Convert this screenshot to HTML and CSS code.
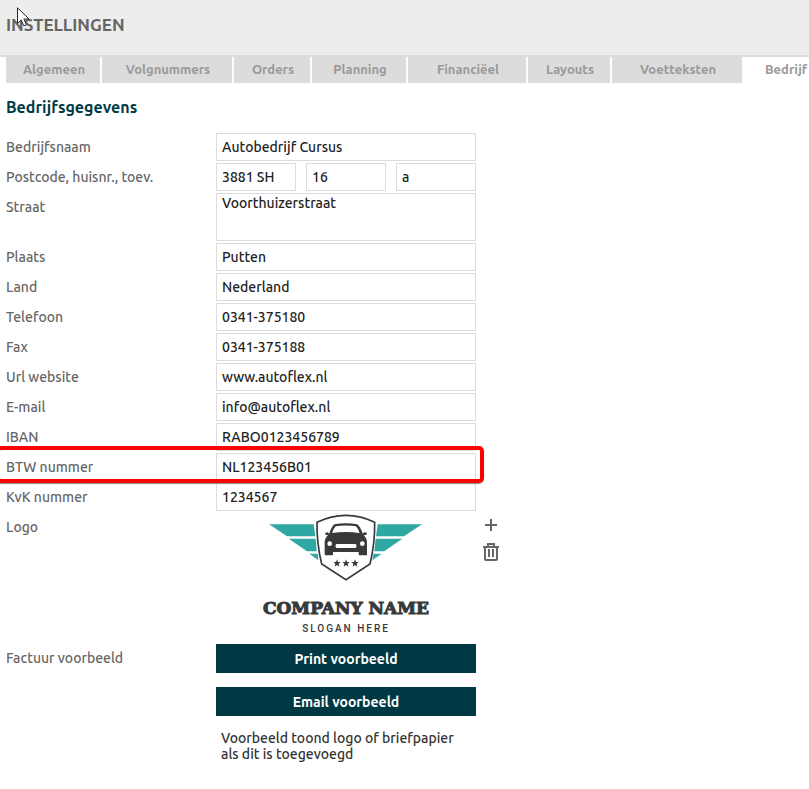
FILE: index.html
```html
<!DOCTYPE html>
<html lang="nl">
<head>
    <meta charset="UTF-8">
    <meta name="viewport" content="width=device-width, initial-scale=1.0">
    <title>Instellingen</title>
    <link rel="stylesheet" href="styles.css">
</head>
<body>
    <header class="page-header">
        <h1>INSTELLINGEN</h1>
        <svg class="cursor" width="13" height="20" viewBox="0 0 13 20">
            <path d="M0.5 0.8V16.5L4.2 13L6.8 18.8L9.4 17.7L6.9 12H12Z" fill="#fff" stroke="#222" stroke-width="1"/>
        </svg>
    </header>
    <nav class="tabs">
        <a href="#algemeen" class="tab">Algemeen</a>
        <a href="#volgnummers" class="tab">Volgnummers</a>
        <a href="#orders" class="tab">Orders</a>
        <a href="#planning" class="tab">Planning</a>
        <a href="#financieel" class="tab">Financiëel</a>
        <a href="#layouts" class="tab">Layouts</a>
        <a href="#voetteksten" class="tab">Voetteksten</a>
        <a href="#bedrijf" class="tab active">Bedrijf</a>
    </nav>
    <main>
        <h2>Bedrijfsgegevens</h2>
        <form class="company-form">
            <div class="row">
                <label for="naam">Bedrijfsnaam</label>
                <input type="text" id="naam" class="field" value="Autobedrijf Cursus">
            </div>
            <div class="row">
                <label for="postcode">Postcode, huisnr., toev.</label>
                <div class="address">
                    <input type="text" id="postcode" class="field" value="3881 SH">
                    <input type="text" class="field" aria-label="Huisnummer" value="16">
                    <input type="text" class="field" aria-label="Toevoeging" value="a">
                </div>
            </div>
            <div class="row">
                <label for="straat">Straat</label>
                <textarea id="straat" class="field">Voorthuizerstraat</textarea>
            </div>
            <div class="row">
                <label for="plaats">Plaats</label>
                <input type="text" id="plaats" class="field" value="Putten">
            </div>
            <div class="row">
                <label for="land">Land</label>
                <input type="text" id="land" class="field" value="Nederland">
            </div>
            <div class="row">
                <label for="telefoon">Telefoon</label>
                <input type="text" id="telefoon" class="field" value="0341-375180">
            </div>
            <div class="row">
                <label for="fax">Fax</label>
                <input type="text" id="fax" class="field" value="0341-375188">
            </div>
            <div class="row">
                <label for="website">Url website</label>
                <input type="text" id="website" class="field" value="www.autoflex.nl">
            </div>
            <div class="row">
                <label for="email">E-mail</label>
                <input type="text" id="email" class="field" value="info@autoflex.nl">
            </div>
            <div class="row">
                <label for="iban">IBAN</label>
                <input type="text" id="iban" class="field" value="RABO0123456789">
            </div>
            <div class="row marked">
                <label for="btw">BTW nummer</label>
                <input type="text" id="btw" class="field" value="NL123456B01">
            </div>
            <div class="row">
                <label for="kvk">KvK nummer</label>
                <input type="text" id="kvk" class="field" value="1234567">
            </div>
            <div class="row logo-row">
                <span class="label">Logo</span>
                <div class="logo">
                    <svg width="190" height="70" viewBox="2 24 570 210">
                        <!-- wings -->
                        <g fill="#2fa8a4">
                            <path d="M56 58H190L195 94H110Z"/>
                            <path d="M115 101H196L199 139H170Z"/>
                            <path d="M177 146H202L204 166Z"/>
                            <path d="M515 58H382L377 94H461Z"/>
                            <path d="M456 101H376L372 139H402Z"/>
                            <path d="M394 146H370L366 166Z"/>
                        </g>
                        <!-- shield -->
                        <path d="M200 52Q242 31 287 31Q332 31 373 52Q374 116 359 177L287 224L214 177Q199 116 200 52Z" fill="#fff" stroke="#37393b" stroke-width="5"/>
                        <!-- car -->
                        <path d="M252 58Q286 52 321 58Q331 67 337 86L341 82L349 83V89L340 91Q350 100 350 113V149Q350 151 347 151H328Q325 151 325 148V141H248V148Q248 151 245 151H226Q223 151 223 148V113Q223 100 233 91L225 89V83L232 82L237 86Q242 67 252 58Z" fill="#37393b"/>
                        <path d="M256 64Q286 59 317 64Q324 72 328 84Q286 78 245 84Q249 72 256 64Z" fill="#fff"/>
                        <rect x="256" y="117" width="62" height="12" rx="4" fill="#fff"/>
                        <circle cx="238" cy="116" r="7" fill="#fff"/>
                        <circle cx="336" cy="116" r="7" fill="#fff"/>
                        <!-- stars -->
                        <g fill="#37393b">
                            <path id="star" d="M287 163L290 171H298L292 176L294 185L287 180L280 185L282 176L276 171H284Z"/>
                            <use href="#star" x="-27"/>
                            <use href="#star" x="27"/>
                        </g>
                    </svg>
                    <strong>COMPANY NAME</strong>
                    <span class="slogan">SLOGAN HERE</span>
                </div>
                <div class="logo-actions">
                    <button type="button" aria-label="Logo toevoegen">
                        <svg width="16" height="16" viewBox="0 0 16 16">
                            <path d="M8 2V14M2 8H14" stroke="#666" stroke-width="2"/>
                        </svg>
                    </button>
                    <button type="button" aria-label="Logo verwijderen">
                        <svg width="16" height="20" viewBox="0 0 16 20" fill="none" stroke="#666" stroke-width="2">
                            <path d="M0 5H16M5 4V2H11V4M2 5V17Q2 18 3 18H13Q14 18 14 17V5"/>
                            <path d="M6 7V15M10 7V15"/>
                        </svg>
                    </button>
                </div>
            </div>
            <div class="row">
                <span class="label">Factuur voorbeeld</span>
                <div class="preview">
                    <button type="button" class="btn">Print voorbeeld</button>
                    <button type="button" class="btn">Email voorbeeld</button>
                    <p>Voorbeeld toond logo of briefpapier als dit is toegevoegd</p>
                </div>
            </div>
        </form>
    </main>
</body>
</html>
```
FILE: styles.css
```css
*{
    box-sizing: border-box;
}
body{
    margin: 0;
    background-color: #fff;
    font-family: Ubuntu, "Noto Sans", sans-serif;
    font-size: 14px;
    font-weight: 500;
    color: #333;
}
.page-header{
    position: relative;
    padding: 13px 6px 18px;
    background-color: #ededed;
    border-bottom: 2px solid #dcdcdc;
}
h1{
    margin: 0;
    font-size: 17px;
    line-height: 24px;
    font-weight: bold;
    color: #666;
}
.cursor{
    position: absolute;
    left: 17px;
    top: 7px;
}
.tabs{
    display: grid;
    grid-template-columns: 94px 130px 76px 94px 118px 82px 130px 1fr;
    gap: 2px;
    padding-left: 6px;
    overflow: hidden;
}
.tab{
    padding: 0 0 2px 2px;
    background-color: #dcdcdc;
    color: #999;
    font-size: 13px;
    font-weight: bold;
    line-height: 24px;
    text-align: center;
    text-decoration: none;
}
.tab.active{
    background-color: #fff;
    padding-left: 21px;
    text-align: left;
}
main{
    padding: 12px 6px;
}
h2{
    margin: 0 0 14px;
    font-size: 16px;
    line-height: 24px;
    font-weight: bold;
    color: #003943;
}
.company-form{
    display: flex;
    flex-direction: column;
    gap: 2px;
}
.row{
    display: flex;
    align-items: flex-start;
}
.row label,
.row .label{
    width: 210px;
    line-height: 28px;
    color: #666;
}
.field{
    width: 260px;
    height: 28px;
    padding: 0 5px;
    border: 1px solid #dcdcdc;
    border-radius: 0;
    background-color: #fff;
    color: #222;
    font-family: inherit;
    font-size: 14px;
    font-weight: inherit;
}
.address{
    display: flex;
    justify-content: space-between;
    width: 260px;
}
.address .field{
    width: 80px;
}
textarea.field{
    height: 48px;
    line-height: 18px;
    resize: none;
}
/* red frame around the whole row */
.marked{
    position: relative;
}
.marked::after{
    content: "";
    position: absolute;
    top: -7px;
    bottom: -2px;
    left: -10px;
    width: 480px;
    border: 4px solid #f00;
    border-radius: 5px;
    box-shadow: 0 1px 1px #888;
    pointer-events: none;
}
.logo-row{
    min-height: 129px;
}
.logo{
    display: flex;
    flex-direction: column;
    align-items: center;
    width: 260px;
    color: #37393b;
}
.logo strong{
    margin-top: 14px;
    font-family: "DejaVu Serif", serif;
    font-size: 17px;
    line-height: 22px;
    white-space: nowrap;
    -webkit-text-stroke: 1px #37393b;
}
.slogan{
    font-family: Roboto, sans-serif;
    font-size: 10px;
    font-weight: 500;
    line-height: 20px;
    letter-spacing: 2px;
}
.logo-actions{
    display: flex;
    flex-direction: column;
    gap: 9px;
    padding: 4px 7px;
}
.logo-actions button{
    display: flex;
    padding: 0;
    border: none;
    background: none;
}
.preview{
    width: 260px;
}
.btn{
    display: block;
    width: 100%;
    height: 29px;
    margin-bottom: 14px;
    border: none;
    background-color: #003943;
    color: #fff;
    font-family: inherit;
    font-size: 14px;
    font-weight: bold;
}
.preview p{
    margin: 0;
    padding: 0 5px;
    line-height: 16px;
}
```
